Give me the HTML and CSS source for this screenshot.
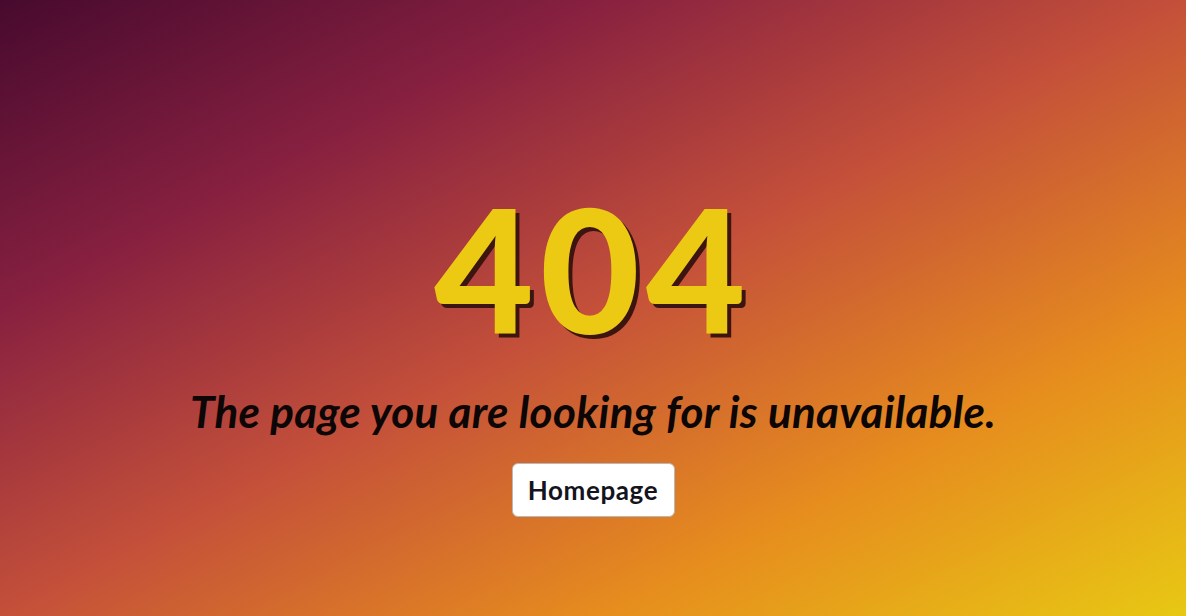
FILE: index.html
```html
<!DOCTYPE html>
<html lang="en">
<head>
<meta charset="utf-8">
<title>404</title>
<link rel="stylesheet" href="styles.css">
</head>
<body>
<main class="page">
  <h1 class="code">404</h1>
  <p class="message">The page you are looking for is unavailable.</p>
  <a class="home-btn" href="#">Homepage</a>
</main>
</body>
</html>
```

FILE: styles.css
```css
html, body {
  margin: 0;
  padding: 0;
  height: 100%;
}
body {
  font-family: Lato, "Open Sans", sans-serif;
  background: linear-gradient(to bottom right, #470a2e 0%, #872040 25%, #c4503a 50%, #e68c1e 75%, #e8c814 100%);
  overflow: hidden;
}
.page {
  height: 100%;
  display: flex;
  flex-direction: column;
  align-items: center;
  justify-content: flex-start;
  padding-top: 182px;
  box-sizing: border-box;
}
.code {
  margin: 0;
  font-family: Lato, sans-serif;
  font-weight: 900;
  font-size: 172px;
  line-height: 172px;
  color: #ecca14;
  letter-spacing: 6px;
  text-shadow: 4px 4px 0 #3c1410;
}
.message {
  margin: 31px 0 0;
  font-family: Lato, sans-serif;
  font-style: italic;
  font-weight: 700;
  font-size: 44px;
  line-height: 1.2;
  letter-spacing: 0.3px;
  color: #0c0606;
}
.home-btn {
  margin-top: 25px;
  display: inline-flex;
  align-items: center;
  justify-content: center;
  width: 163px;
  height: 54px;
  box-sizing: border-box;
  background: #fff;
  border: 1px solid #b8b8b8;
  border-radius: 6px;
  color: #14141e;
  font-family: Lato, sans-serif;
  font-weight: 700;
  font-size: 26px;
  letter-spacing: 0.6px;
  text-decoration: none;
}
```
